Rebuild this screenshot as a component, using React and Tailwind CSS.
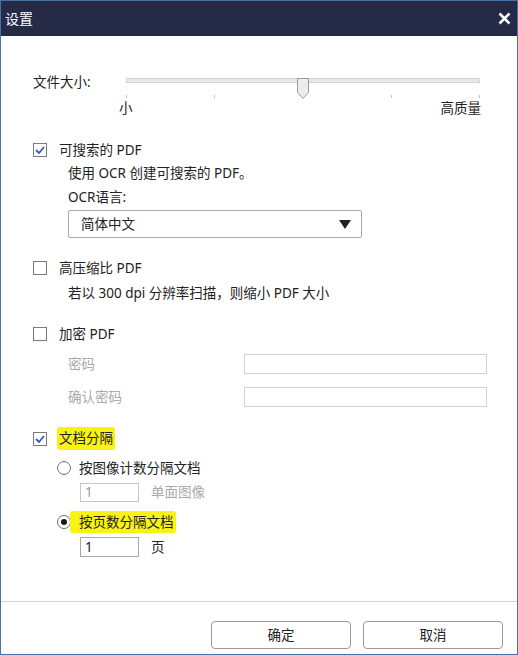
import { useState } from "react";

const font = { fontFamily: '"Noto Sans", "Noto Sans CJK SC", sans-serif' };

const Checkbox = ({ checked }) => (
  <span className="w-[14px] h-[14px] border border-[#7a7a7a] bg-white flex items-center justify-center shrink-0">
    {checked && (
      <svg width="10" height="8" viewBox="0 0 10 8">
        <path d="M1 4l3 3 5-6" fill="none" stroke="#3a58c0" strokeWidth="1.8" />
      </svg>
    )}
  </span>
);

const Radio = ({ checked }) => (
  <span className="w-[14px] h-[14px] rounded-full border border-[#6e6e6e] bg-white flex items-center justify-center shrink-0">
    {checked && <span className="w-[6px] h-[6px] rounded-full bg-[#1a1a1a]" />}
  </span>
);

const Slider = () => (
  <div className="relative w-[354px] h-[45px]">
    <div className="mt-[6px] h-[5px] bg-[#e8e8e8] border border-[#d4d4d4]" />
    {/* thumb */}
    <svg className="absolute left-[171px] top-0" width="12" height="21" viewBox="0 0 12 21">
      <path d="M0.5 0.5h11v14l-5.5 6-5.5-6z" fill="#ececec" stroke="#9a9a9a" />
    </svg>
    <div className="mt-[12px] flex justify-between">
      {[0, 1, 2, 3, 4].map((i) => (
        <span key={i} className="w-px h-[3px] bg-[#c4c4c4]" />
      ))}
    </div>
  </div>
);

export default function App() {
  const [searchable] = useState(true);

  return (
    <div
      className="w-[518px] h-[655px] border border-[#4672a6] bg-white flex flex-col text-[13.5px] text-[#222]"
      style={font}
    >
      {/* title bar */}
      <div className="h-[35px] bg-[#252a47] flex items-center justify-between pl-[4px] pr-[6px] shrink-0">
        <span className="text-white text-[14px]">设置</span>
        <svg width="13" height="13" viewBox="0 0 13 13">
          <path d="M1.5 1.5l10 10M11.5 1.5l-10 10" stroke="#fff" strokeWidth="2.6" />
        </svg>
      </div>

      {/* body */}
      <div className="flex-1 pl-[32px]">
        {/* file size */}
        <div className="mt-[36px] flex items-start">
          <div className="w-[93px] leading-[20px]">文件大小:</div>
          <div>
            <Slider />
            <div className="-mt-[24px] flex justify-between w-[362px] -ml-[7px] leading-[18px]">
              <span>小</span>
              <span>高质量</span>
            </div>
          </div>
        </div>

        {/* searchable pdf */}
        <div className="mt-[23px] flex items-center gap-[12px] leading-[20px]">
          <Checkbox checked={searchable} />
          <span>可搜索的 PDF</span>
        </div>
        <div className="pl-[35px]">
          <div className="mt-[3px] leading-[20px]">使用 OCR 创建可搜索的 PDF。</div>
          <div className="mt-[4px] leading-[20px]">OCR语言:</div>
          <div className="mt-[3px] w-[294px] h-[28px] border border-[#a9a9a9] rounded-[2px] flex items-center justify-between pl-[12px] pr-[10px]">
            <span>简体中文</span>
            <svg width="12" height="9" viewBox="0 0 12 9">
              <path d="M0 0h12L6 9z" fill="#222" />
            </svg>
          </div>
        </div>

        {/* high compression */}
        <div className="mt-[20px] flex items-center gap-[12px] leading-[20px]">
          <Checkbox />
          <span>高压缩比 PDF</span>
        </div>
        <div className="pl-[35px] mt-[5px] leading-[20px]">若以 300 dpi 分辨率扫描，则缩小 PDF 大小</div>

        {/* encrypt */}
        <div className="mt-[21px] flex items-center gap-[12px] leading-[20px]">
          <Checkbox />
          <span>加密 PDF</span>
        </div>
        <div className="mt-[10px] flex items-center pl-[35px] leading-[20px]">
          <span className="w-[176px] text-[#aaa]">密码</span>
          <div className="w-[243px] h-[20px] border border-[#d2d2d2]" />
        </div>
        <div className="mt-[13px] flex items-center pl-[35px] leading-[20px]">
          <span className="w-[176px] text-[#aaa]">确认密码</span>
          <div className="w-[243px] h-[20px] border border-[#d2d2d2]" />
        </div>

        {/* split document */}
        <div className="mt-[20px] flex items-center gap-[10px] leading-[20px]">
          <Checkbox checked />
          <span className="bg-[#f8f215] px-[2px] rounded-[3px] leading-[23px]">文档分隔</span>
        </div>
        <div className="pl-[24px]">
          <div className="mt-[8px] flex items-center gap-[8px] leading-[20px]">
            <Radio />
            <span>按图像计数分隔文档</span>
          </div>
          <div className="mt-[4px] flex items-center pl-[23px] gap-[12px] leading-[20px]">
            <div className="w-[59px] h-[19px] border border-[#c6c6c6] text-[#999] pl-[4px] leading-[17px]">1</div>
            <span className="text-[#aaa]">单面图像</span>
          </div>
          <div className="mt-[9px] flex items-center leading-[20px]">
            <Radio checked />
            <span className="-ml-[1px] bg-[#f8f215] pl-[9px] pr-[2px] rounded-[3px] leading-[22px]">按页数分隔文档</span>
          </div>
          <div className="mt-[4px] flex items-center pl-[23px] gap-[12px] leading-[20px]">
            <div className="w-[59px] h-[20px] border border-[#a8a8a8] pl-[4px] leading-[18px]">1</div>
            <span>页</span>
          </div>
        </div>
      </div>

      {/* footer */}
      <div className="border-t border-[#d4d4d4] h-[53px] shrink-0 flex justify-end items-start pt-[19px] pr-[14px] gap-[12px]">
        <button className="w-[140px] h-[28px] border border-[#9a9a9a] rounded-[4px] bg-white">确定</button>
        <button className="w-[140px] h-[28px] border border-[#9a9a9a] rounded-[4px] bg-white">取消</button>
      </div>
    </div>
  );
}
